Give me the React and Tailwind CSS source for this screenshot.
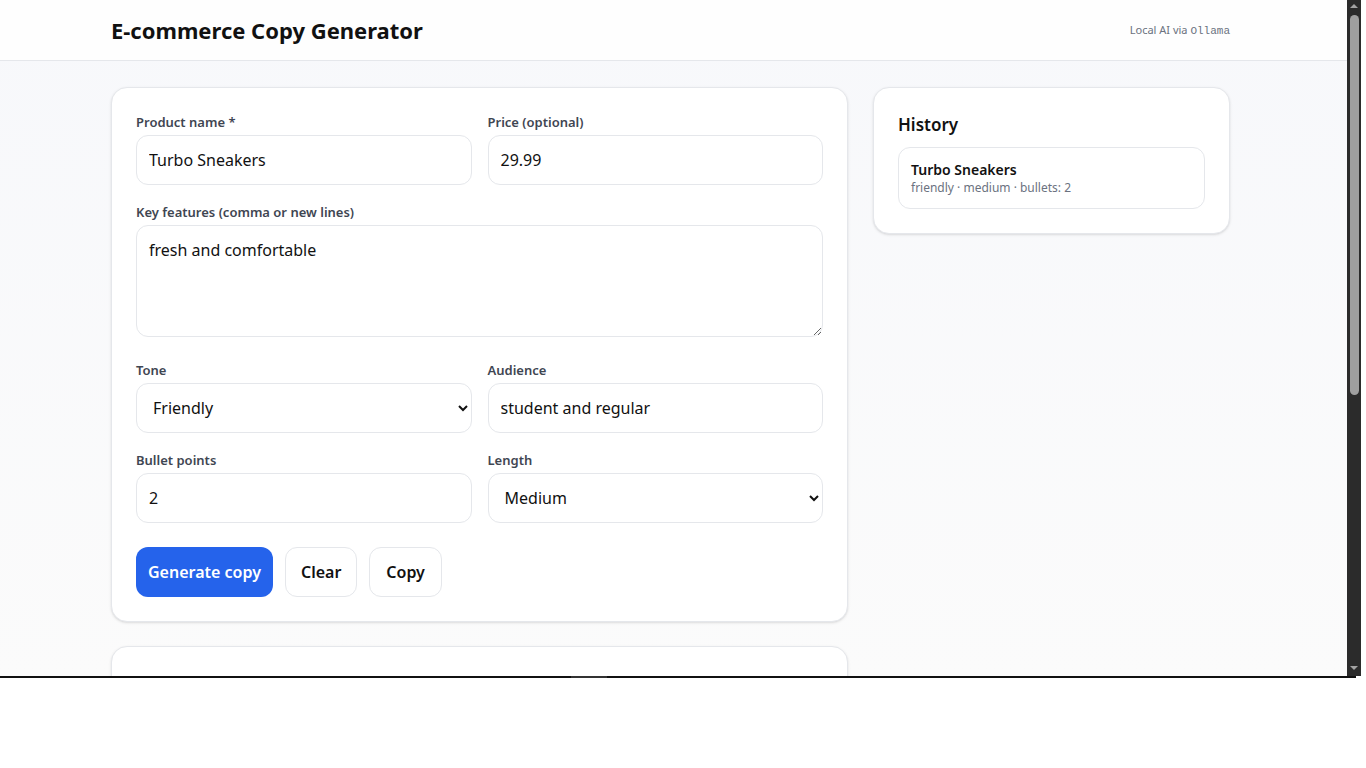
const font = { fontFamily: '"Segoe UI", "Noto Sans", "Open Sans", sans-serif' }

function Field({ label, children, className = "" }) {
    return (
        <div className={"flex flex-col " + className}>
            <label className="text-[13px] leading-[20px] font-semibold text-[#3f4652] mb-[3px]">{label}</label>
            {children}
        </div>
    )
}

const inputCls =
    "w-full h-[50px] rounded-xl border border-[#e5e7eb] bg-white px-3 text-[16px] text-[#111] outline-none"

export default function App() {
    return (
        <div className="w-[1366px] h-[768px] bg-white flex flex-col overflow-hidden" style={font}>
            <div className="flex h-[676px]">
                <div className="w-[1347px] h-full overflow-hidden bg-gradient-to-b from-[#f7f8fb] to-[#fbfbfb]">
                    <header className="h-[61px] bg-[#fefefe] border-b border-[#e5e7eb]">
                        <div className="ml-[111px] w-[1119px] h-full flex items-center justify-between">
                            <h1 className="text-[22px] font-bold text-[#111]">E-commerce Copy Generator</h1>
                            <div className="text-[11px] text-[#6b7280] pt-[1px]">
                                Local AI via <span className="font-['Liberation_Mono',monospace] text-[11px]">Ollama</span>
                            </div>
                        </div>
                    </header>

                    <main className="ml-[111px] w-[1120px] pt-[26px] grid grid-cols-[737px_357px] gap-x-[25px] items-start">
                        <div className="flex flex-col gap-6">
                            <section className="bg-white rounded-2xl border border-[#e5e7eb] shadow-sm p-6">
                                <div className="grid grid-cols-2 gap-x-4 gap-y-[17px]">
                                    <Field label="Product name *">
                                        <input className={inputCls} defaultValue="Turbo Sneakers" />
                                    </Field>
                                    <Field label="Price (optional)">
                                        <input className={inputCls} defaultValue="29.99" />
                                    </Field>
                                    <Field label="Key features (comma or new lines)" className="col-span-2">
                                        <textarea
                                            className="w-full h-[112px] rounded-xl border border-[#e5e7eb] bg-white px-3 py-3 text-[16px] leading-6 text-[#111] outline-none block mb-[6px]"
                                            defaultValue="fresh and comfortable"
                                        />
                                    </Field>
                                    <Field label="Tone">
                                        <select className={inputCls + " pl-[12px] pr-2"} defaultValue="friendly">
                                            <option value="friendly">Friendly</option>
                                            <option value="professional">Professional</option>
                                        </select>
                                    </Field>
                                    <Field label="Audience">
                                        <input className={inputCls} defaultValue="student and regular" />
                                    </Field>
                                    <Field label="Bullet points">
                                        <input className={inputCls} defaultValue="2" />
                                    </Field>
                                    <Field label="Length">
                                        <select className={inputCls + " pl-[12px] pr-2"} defaultValue="medium">
                                            <option value="short">Short</option>
                                            <option value="medium">Medium</option>
                                        </select>
                                    </Field>
                                </div>
                                <div className="flex gap-3 mt-6">
                                    <button className="h-[50px] px-3 rounded-xl bg-[#2563eb] text-white text-[16px] font-semibold">
                                        Generate copy
                                    </button>
                                    <button className="h-[50px] px-[15px] rounded-xl border border-[#e5e7eb] bg-white text-[#111] text-[16px] font-semibold">
                                        Clear
                                    </button>
                                    <button className="h-[50px] px-4 rounded-xl border border-[#e5e7eb] bg-white text-[#111] text-[16px] font-semibold">
                                        Copy
                                    </button>
                                </div>
                            </section>
                            <section className="bg-white rounded-2xl border border-[#e5e7eb] shadow-sm h-[200px]" />
                        </div>

                        <aside className="bg-white rounded-2xl border border-[#e5e7eb] shadow-sm p-6">
                            <h2 className="text-[17px] leading-6 font-semibold text-[#111] pt-[1px] mb-[10px]">History</h2>
                            <div className="rounded-xl border border-[#e5e7eb] px-3 py-3">
                                <div className="text-[14px] leading-5 font-semibold text-[#111]">Turbo Sneakers</div>
                                <div className="text-[12px] leading-4 text-[#6b7280]">friendly · medium · bullets: 2</div>
                            </div>
                        </aside>
                    </main>
                </div>
                <div className="w-[14px] h-full bg-[#2b2b2b] flex flex-col items-center">
                    <div className="mt-[4px] w-0 h-0 border-l-[4px] border-r-[4px] border-b-[4px] border-l-transparent border-r-transparent border-b-[#a3a3a3]" />
                    <div className="mt-[7px] w-[9px] h-[380px] rounded-full bg-[#9f9f9f]" />
                    <div className="flex-1" />
                    <div className="mb-[6px] w-0 h-0 border-l-[4px] border-r-[4px] border-t-[4px] border-l-transparent border-r-transparent border-t-[#a3a3a3]" />
                </div>
            </div>
            <div className="h-[2px] w-[1356px] bg-[#111] flex">
                <div className="ml-[571px] w-[36px] h-full bg-[#333]" />
            </div>
        </div>
    )
}
